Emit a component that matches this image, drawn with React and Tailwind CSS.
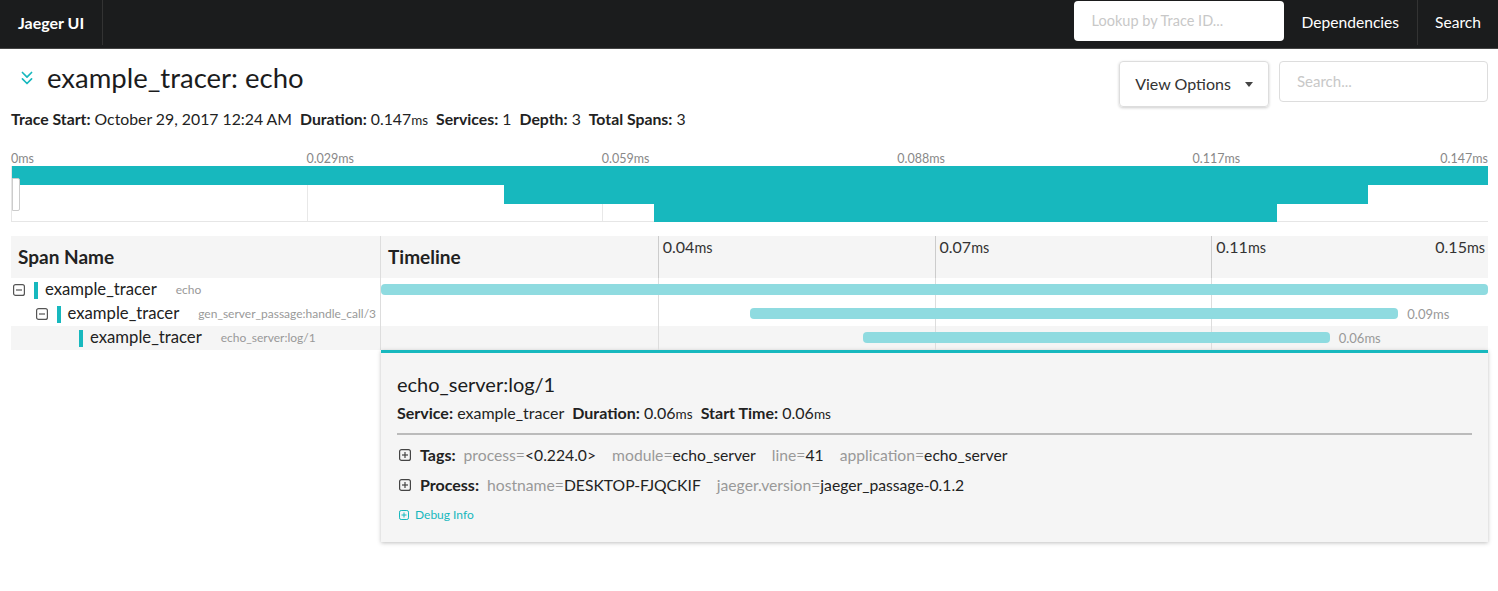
import React from 'react';
import { ChevronsDown } from 'lucide-react';

const TEAL = '#17b8be';

const spans = [
  { depth: 0, service: 'example_tracer', op: 'echo', start: 0, end: 1, children: true },
  { depth: 1, service: 'example_tracer', op: 'gen_server_passage:handle_call/3', start: 0.333, end: 0.919, children: true, label: '0.09ms' },
  { depth: 2, service: 'example_tracer', op: 'echo_server:log/1', start: 0.435, end: 0.857, children: false, label: '0.06ms', selected: true },
];

const miniTicks = ['0ms', '0.029ms', '0.059ms', '0.088ms', '0.117ms', '0.147ms'];

const Unit = ({ v, u = 'ms', size = 'text-[0.85em]' }) => (
  <span>
    {v}
    <span className={size}>{u}</span>
  </span>
);

const SquareIcon = ({ plus, className = '' }) => (
  <svg width="12" height="12" viewBox="0 0 12 12" className={className} fill="none" stroke="currentColor" strokeWidth="1.2">
    <rect x="0.6" y="0.6" width="10.8" height="10.8" rx="2" />
    <line x1="3" y1="6" x2="9" y2="6" />
    {plus && <line x1="6" y1="3" x2="6" y2="9" />}
  </svg>
);

const Meta = ({ k, children }) => (
  <span className="mr-[8px]">
    <span className="font-bold">{k}:</span> {children}
  </span>
);

const KV = ({ k, v }) => (
  <span className="mr-[16px]">
    <span className="text-[#999]">{k}=</span>
    <span className="text-[#222]">{v}</span>
  </span>
);

export default function App() {
  return (
    <div className="font-['Lato','Noto_Sans',sans-serif] bg-white text-[#222] min-h-[591px]">
      {/* top nav */}
      <div className="h-[49px] bg-[#1b1c1d] flex text-white border-b border-[#444] pb-[3px]">
        <div className="px-[18px] flex items-center font-bold text-[16px] border-r border-[#333] whitespace-nowrap shrink-0">Jaeger UI</div>
        <div className="flex-1" />
        <div className="w-[210px] h-[40px] bg-white rounded-[4px] mt-px flex items-center px-[18px] text-[14.5px] text-[#c8c8c8]">
          Lookup by Trace ID...
        </div>
        <div className="px-[18px] flex items-center text-[15.6px] border-r border-[#333]">Dependencies</div>
        <div className="px-[17px] flex items-center text-[15.6px]">Search</div>
      </div>

      <div className="px-[11px] pr-[10px]">
        {/* header */}
        <div className="flex justify-between pt-[12px]">
          <div>
            <div className="flex items-center h-[34px] pl-[5px] gap-[9px]">
              <ChevronsDown size={22} color={TEAL} strokeWidth={1.8} />
              <h1 className="text-[27.5px] leading-[34px] text-[#1b1c1d]">example_tracer: echo</h1>
            </div>
            <div className="mt-[14px] text-[15.8px] leading-[20px]">
              <Meta k="Trace Start">October 29, 2017 12:24 AM</Meta>
              <Meta k="Duration"><Unit v="0.147" /></Meta>
              <Meta k="Services">1</Meta>
              <Meta k="Depth">3</Meta>
              <Meta k="Total Spans">3</Meta>
            </div>
          </div>
          <div className="flex items-start gap-[10px]">
            <div className="w-[150px] h-[46px] border border-[#ddd] rounded-[4px] shadow-[0_1px_3px_rgba(0,0,0,0.2)] flex items-center justify-center gap-[14px] text-[16px] text-[#333]">
              View Options
              <span className="w-0 h-0 border-l-[4px] border-r-[4px] border-t-[5px] border-l-transparent border-r-transparent border-t-[#444]" />
            </div>
            <div className="w-[209px] h-[41px] border border-[#ddd] rounded-[4px] flex items-center px-[17px] text-[15px] text-[#c8c8c8]">
              Search...
            </div>
          </div>
        </div>

        {/* minimap */}
        <div className="mt-[22px]">
          <div className="relative h-[14px] text-[12.5px] leading-[14px] text-[#888]">
            {miniTicks.map((t, i) =>
              i === miniTicks.length - 1 ? (
                <span key={t} className="absolute right-0 top-0 whitespace-nowrap">{t}</span>
              ) : (
                <span key={t} className="absolute top-0 whitespace-nowrap" style={{ left: `${i * 20}%` }}>{t}</span>
              )
            )}
          </div>
          <div className="relative h-[56px] border-b border-l border-[#e6e6e6]">
            {[1, 2, 3, 4].map((i) => (
              <div key={i} className="absolute top-0 bottom-0 w-px bg-[#e8e8e8]" style={{ left: `${i * 20}%` }} />
            ))}
            {spans.map((s, i) => (
              <div
                key={i}
                className="absolute h-[19px] bg-[#17b8be]"
                style={{ top: i * 18.5, left: `${s.start * 100}%`, width: `${(s.end - s.start) * 100}%` }}
              />
            ))}
            <div className="absolute left-0 top-[12px] w-[8px] h-[33px] bg-white border border-[#ccc] rounded-r-[2px]" />
          </div>
        </div>

        {/* trace table */}
        <div className="mt-[14px] flex flex-col">
          <div className="flex h-[42px] bg-[#f5f5f5]">
            <div className="w-[370px] shrink-0 border-r border-[#ddd] flex items-center pl-[7px] text-[19px] font-bold text-[#222]">Span Name</div>
            <div className="flex-1 relative">
              <div className="absolute left-[7px] top-0 h-full flex items-center text-[19px] font-bold text-[#222]">Timeline</div>
              {['0.04', '0.07', '0.11'].map((t, i) => (
                <div key={t} className="absolute top-0 h-full border-l border-[#ccc] pl-[4px] text-[16px] leading-[22px] text-[#333]" style={{ left: `${(i + 1) * 25}%` }}>
                  <Unit v={t} size="text-[0.9em]" />
                </div>
              ))}
              <div className="absolute right-[3px] top-0 text-[16px] leading-[22px] text-[#333]">
                <Unit v="0.15" size="text-[0.9em]" />
              </div>
            </div>
          </div>

          {spans.map((s, i) => (
            <div key={i} className={`flex h-[24px] ${s.selected ? 'bg-[#f5f5f5]' : 'bg-white'}`}>
              <div className="w-[370px] shrink-0 border-r border-[#ddd] flex items-center whitespace-nowrap overflow-hidden" style={{ paddingLeft: 2 + s.depth * 22.5 }}>
                <span className="w-[12px] flex text-[#555]">{s.children && <SquareIcon />}</span>
                <span className="ml-[9px] w-[4px] h-[17px] bg-[#17b8be]" />
                <span className="ml-[7px] text-[16.7px] text-[#222]">{s.service}</span>
                <span className="ml-[19px] text-[12px] text-[#999]">{s.op}</span>
              </div>
              <div className="flex-1 relative">
                {[1, 2, 3].map((g) => (
                  <div key={g} className="absolute top-0 bottom-0 w-px bg-[#ddd]" style={{ left: `${g * 25}%` }} />
                ))}
                <div
                  className="absolute top-[6px] h-[11px] rounded-[4px] bg-[#8fdbe0]"
                  style={{ left: `${s.start * 100}%`, width: `${(s.end - s.start) * 100}%` }}
                />
                {s.label && (
                  <span className="absolute top-[3px] text-[13px] text-[#999] pl-[9px]" style={{ left: `${s.end * 100}%` }}>
                    {s.label}
                  </span>
                )}
              </div>
            </div>
          ))}

          {/* span detail */}
          <div className="flex">
            <div className="w-[370px] shrink-0" />
            <div className="flex-1 border-t-[3px] border-[#17b8be] bg-[#f5f5f5] shadow-[0_1px_4px_rgba(0,0,0,0.25)] px-[16px] pt-[19px] pb-[19px]">
              <div className="text-[20px] leading-[24px] text-[#1b1c1d]">echo_server:log/1</div>
              <div className="mt-[7px] text-[16px] leading-[20px]">
                <Meta k="Service">example_tracer</Meta>
                <Meta k="Duration"><Unit v="0.06" /></Meta>
                <Meta k="Start Time"><Unit v="0.06" /></Meta>
              </div>
              <div className="mt-[9px] h-[2px] bg-[#bbb]" />
              <div className="mt-[10px] flex items-center text-[15.7px] leading-[20px] whitespace-nowrap">
                <SquareIcon plus className="text-[#444] ml-[2px]" />
                <span className="ml-[9px] mr-[8px] font-bold text-[16px]">Tags:</span>
                <KV k="process" v="<0.224.0>" />
                <KV k="module" v="echo_server" />
                <KV k="line" v="41" />
                <KV k="application" v="echo_server" />
              </div>
              <div className="mt-[10px] flex items-center text-[15.7px] leading-[20px] whitespace-nowrap">
                <SquareIcon plus className="text-[#444] ml-[2px]" />
                <span className="ml-[9px] mr-[8px] font-bold text-[16px]">Process:</span>
                <KV k="hostname" v="DESKTOP-FJQCKIF" />
                <KV k="jaeger.version" v="jaeger_passage-0.1.2" />
              </div>
              <div className="mt-[12px] flex items-center gap-[6px] text-[12px] leading-[16px] text-[#17b8be]">
                <SquareIcon plus className="ml-[2px] w-[10px] h-[10px]" />
                Debug Info
              </div>
            </div>
          </div>
        </div>
      </div>
    </div>
  );
}
